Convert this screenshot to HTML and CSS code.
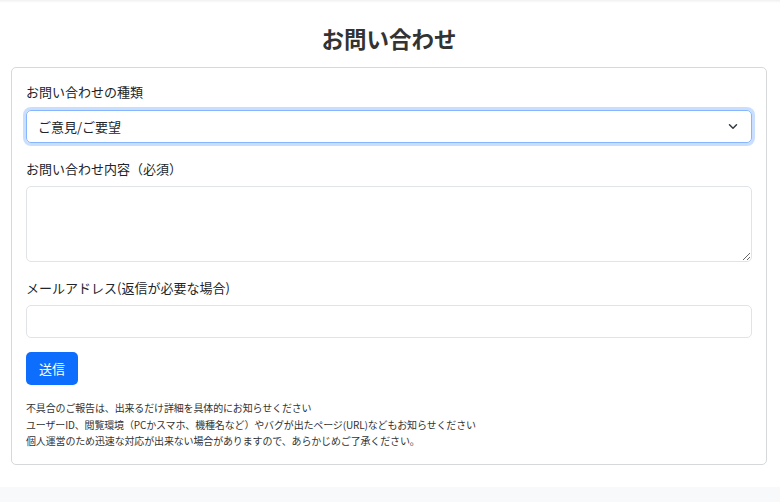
FILE: index.html
```html
<!DOCTYPE html>
<html lang="ja">
<head>
<meta charset="utf-8">
<title>お問い合わせ</title>
<link rel="stylesheet" href="styles.css">
</head>
<body>
<div class="topline"></div>
<main class="page">
  <h1 class="title">お問い合わせ</h1>
  <form class="card">
    <label class="label">お問い合わせの種類</label>
    <div class="select">
      <span>ご意見/ご要望</span>
      <svg class="chev" width="10" height="7" viewBox="0 0 10 7"><path d="M1.5 1.8 5 5.2l3.5-3.4" fill="none" stroke="#343a40" stroke-width="1.5" stroke-linecap="round" stroke-linejoin="round"/></svg>
    </div>
    <label class="label gap">お問い合わせ内容（必須）</label>
    <textarea class="field area"></textarea>
    <label class="label gap">メールアドレス(返信が必要な場合)</label>
    <input class="field input" type="text">
    <div class="actions"><button type="button" class="btn">送信</button></div>
    <p class="notes">不具合のご報告は、出来るだけ詳細を具体的にお知らせください<br>ユーザーID、閲覧環境（PCかスマホ、機種名など）やバグが出たページ(URL)などもお知らせください<br>個人運営のため迅速な対応が出来ない場合がありますので、あらかじめご了承ください。</p>
  </form>
</main>
<footer class="foot"></footer>
</body>
</html>
```
FILE: styles.css
```css
* { box-sizing: border-box; }
html, body { margin: 0; padding: 0; background: #fff; }
body {
  font-family: "Noto Sans CJK JP", "Noto Sans", sans-serif;
  color: #212529;
  width: 780px;
  height: 502px;
  overflow: hidden;
  display: flex;
  flex-direction: column;
}
.topline {
  height: 3px;
  background: linear-gradient(#f0f0f0, #fff);
}
.page {
  padding: 0 14px 0 11px;
  flex: 1;
}
.title {
  margin: 19px 0 0;
  height: 45px;
  text-align: center;
  font-size: 22.5px;
  font-weight: 700;
  line-height: 32px;
  color: #333;
  width: 756px;
}
.card {
  width: 756px;
  border: 1px solid #d6d8da;
  border-radius: 5px;
  padding: 15px 14px 14px;
  display: flex;
  flex-direction: column;
}
.label {
  font-size: 13px;
  line-height: 18px;
  height: 18px;
  color: #212529;
  margin-bottom: 9px;
}
.label.gap { margin-top: 17px; margin-bottom: 8px; }
.select {
  height: 33px;
  border: 1px solid #86b7fe;
  border-radius: 5px;
  box-shadow: 0 0 0 3px rgba(13,110,253,.22);
  display: flex;
  align-items: center;
  justify-content: space-between;
  padding: 0 13px 0 11px;
  font-size: 13px;
  color: #212529;
}
.chev { display: block; }
.field {
  display: block;
  width: 100%;
  border: 1px solid #e1e4e7;
  border-radius: 5px;
  background: #fff;
  font-family: inherit;
  font-size: 13px;
  margin: 0;
  outline: none;
}
.area { height: 76px; resize: vertical; }
.input { height: 33px; }
.actions { margin-top: 14px; display: flex; }
.btn {
  height: 33px;
  padding: 0 13px;
  border: none;
  border-radius: 5px;
  background: #0d6efd;
  color: #fff;
  font-family: inherit;
  font-size: 13px;
  line-height: 33px;
}
.notes {
  margin: 15px 0 0;
  font-size: 10px;
  line-height: 16.5px;
  color: #333;
  letter-spacing: -0.15px;
}
.foot {
  height: 15px;
  background: #f8f9fa;
}
```
